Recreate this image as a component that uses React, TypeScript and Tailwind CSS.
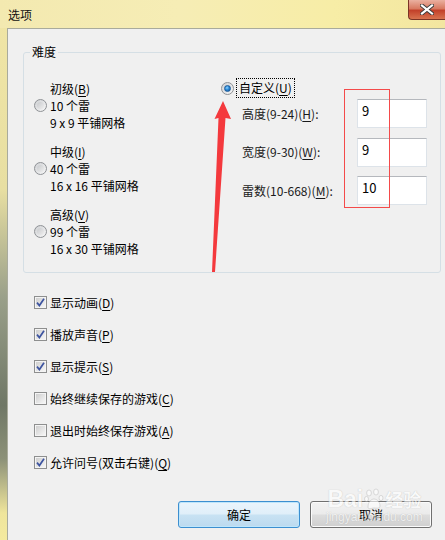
import React from "react";

const font = { fontFamily: '"Noto Sans CJK SC", "Noto Sans", sans-serif' };

const Radio = ({ checked = false }: { checked?: boolean }) => (
  <span className="relative flex size-[13px] shrink-0 items-center justify-center rounded-full border border-[#8f9296] bg-[linear-gradient(135deg,#cfd1d4_0%,#f7f7f7_100%)]">
    {checked ? (
      <span className="size-[7px] rounded-full border border-[#1b5b9b] bg-[radial-gradient(circle_at_40%_35%,#8fd3ff_0%,#2b8ad8_45%,#0f4f93_100%)]" />
    ) : (
      <span className="size-[7px] rounded-full bg-[linear-gradient(135deg,#c8cacd_0%,#eeeeee_100%)]" />
    )}
  </span>
);

const Checkbox = ({ checked = false }: { checked?: boolean }) => (
  <span className="flex size-[13px] shrink-0 items-center justify-center border border-[#8e8f8f] bg-white">
    <span className="flex size-[11px] items-center justify-center border border-[#f4f4f4] bg-[linear-gradient(135deg,#cfcfcf_0%,#f6f6f6_100%)]">
      {checked && (
        <svg width="9" height="9" viewBox="0 0 9 9">
          <path d="M1 4.6 L3.4 7.6 L8 0.8" fill="none" stroke="#3d54a0" strokeWidth="1.7" />
        </svg>
      )}
    </span>
  </span>
);

const Key = ({ k }: { k: string }) => (
  <>
    (<span className="underline underline-offset-[2px]">{k}</span>)
  </>
);

const Level = ({ title, k, mines, grid }: { title: string; k: string; mines: string; grid: string }) => (
  <div className="flex flex-col leading-[17px]">
    <div className="pl-[16px]">
      {title}
      <Key k={k} />
    </div>
    <div className="flex items-center">
      <Radio />
      <span className="pl-[3px]">{mines}</span>
    </div>
    <div className="pl-[16px]">{grid}</div>
  </div>
);

const Field = ({ label, k, value }: { label: string; k: string; value: string }) => (
  <div className="flex items-center">
    <span className="w-[115px] text-[#1a1a1a]">
      {label}
      <Key k={k} />:
    </span>
    <div className="h-[29px] w-[70px] border border-[#dde3e9] border-t-[#b5b8bd] bg-white pl-[4px] pt-[2px] text-[13px] leading-[17px]">
      {value}
    </div>
  </div>
);

const options = [
  { text: "显示动画", k: "D", on: true },
  { text: "播放声音", k: "P", on: true },
  { text: "显示提示", k: "S", on: true },
  { text: "始终继续保存的游戏", k: "C", on: false },
  { text: "退出时始终保存游戏", k: "A", on: false },
  { text: "允许问号(双击右键)", k: "Q", on: true },
];

export default function App() {
  return (
    <div
      style={font}
      className="relative flex h-[540px] w-[445px] flex-col overflow-hidden bg-[linear-gradient(180deg,#f1e6a6_0%,#e8dfa2_35%,#9aa08a_55%,#6f7766_75%,#8c9178_85%,#efe59c_95%,#f4ea9f_100%)] text-[12px] text-black"
    >
      {/* title bar */}
      <div className="flex h-[28px] items-start bg-[linear-gradient(90deg,#f3e9b0_0%,#f6edb5_40%,#f7eda6_75%,#f3e6a0_100%)]">
        <span className="pl-[8px] pt-[6px] leading-[17px] text-[#111]">选项</span>
        <div className="ml-auto flex h-[20px] w-[37px] items-center justify-center rounded-bl-[4px] border border-t-0 border-r-0 border-[#7a3426] bg-[linear-gradient(180deg,#eab0a0_0%,#d87a62_45%,#c2412a_55%,#d8734f_100%)]">
          <svg width="14" height="11" viewBox="0 0 14 11">
            <path d="M2 1.5 L12 9.5 M12 1.5 L2 9.5" stroke="#3a3a3a" strokeWidth="4" strokeLinecap="square" />
            <path d="M2 1.5 L12 9.5 M12 1.5 L2 9.5" stroke="#ffffff" strokeWidth="2.2" strokeLinecap="square" />
          </svg>
        </div>
      </div>

      {/* client area */}
      <div className="ml-[7px] flex flex-1 flex-col border-l border-t border-[#a9ab9c] bg-[#f0f0f0]">
        <fieldset className="ml-[15px] mt-[15px] w-[418px] rounded-[3px] border border-[#d5dfe5] px-0 pb-[15px] pt-[20px]">
          <legend className="ml-[6px] px-[2px] leading-[16px]">难度</legend>
          <div className="flex">
            <div className="flex w-[197px] flex-col gap-[12px] pl-[10px]">
              <Level title="初级" k="B" mines="10 个雷" grid="9 x 9 平铺网格" />
              <Level title="中级" k="I" mines="40 个雷" grid="16 x 16 平铺网格" />
              <Level title="高级" k="V" mines="99 个雷" grid="16 x 30 平铺网格" />
            </div>
            <div className="-mt-[2px] flex flex-col">
              <div className="flex items-center">
                <Radio checked />
                <span className="ml-[2px] border border-dotted border-black px-[2px] leading-[18px]">
                  自定义
                  <Key k="U" />
                </span>
              </div>
              <div className="mt-[1px] flex flex-col gap-[9.5px] pl-[21px]">
                <Field label="高度(9-24)" k="H" value="9" />
                <Field label="宽度(9-30)" k="W" value="9" />
                <Field label="雷数(10-668)" k="M" value="10" />
              </div>
            </div>
          </div>
        </fieldset>

        <div className="mt-[21px] flex flex-col gap-[15px] pl-[26px]">
          {options.map((o) => (
            <div key={o.text} className="flex h-[17px] items-center gap-[3px] leading-[17px]">
              <Checkbox checked={o.on} />
              <span>
                {o.text}
                <Key k={o.k} />
              </span>
            </div>
          ))}
        </div>

        <div className="mt-[30px] flex justify-end gap-[10px] pr-[13px]">
          <button className="h-[27px] w-[122px] rounded-[3px] border border-[#3c8fd0] bg-[linear-gradient(180deg,#eaf5fc_0%,#e0eff9_48%,#c8e2f3_52%,#bcdaef_100%)] shadow-[inset_0_0_0_1px_#bfe6fb]">
            确定
          </button>
          <button className="h-[27px] w-[122px] rounded-[3px] border border-[#707070] bg-[linear-gradient(180deg,#f2f2f2_0%,#ebebeb_48%,#dddddd_52%,#cfcfcf_100%)] shadow-[inset_0_0_0_1px_#fbfbfb]">
            取消
          </button>
        </div>
      </div>

      {/* annotation: red box */}
      <div className="pointer-events-none absolute left-[344px] top-[89px] h-[119px] w-[46px] border-[1.5px] border-[#f44a4a]" />

      {/* annotation: red arrow */}
      <svg className="pointer-events-none absolute left-0 top-0" width="445" height="540" viewBox="0 0 445 540">
        <polygon points="223,101 231,119 225.5,118 215,272 212,272 218.5,118 214.5,119" fill="#f4393d" />
      </svg>

      {/* watermark */}
      <div className="pointer-events-none absolute left-[326px] top-[486px] flex flex-col items-center text-white opacity-60 [text-shadow:0_0_1px_#9a9a9a]">
        <div className="flex items-center leading-[26px]">
          <span className="text-[23px] font-bold" style={{ fontFamily: '"Liberation Sans", sans-serif' }}>
            Bai
          </span>
          <svg width="20" height="22" viewBox="0 0 20 22" className="mx-[1px]">
            <g fill="#ffffff" stroke="#a8a8a8" strokeWidth="0.6">
              <ellipse cx="5" cy="5" rx="2.4" ry="3" />
              <ellipse cx="12" cy="4" rx="2.4" ry="3" />
              <ellipse cx="2.5" cy="11" rx="2" ry="2.6" />
              <ellipse cx="17" cy="10" rx="2" ry="2.6" />
              <path d="M4 19 C4 13 8 11 10 11 C13 11 16 14 16 18 C16 21 12 20 10 20 C8 20 4 22 4 19 Z" />
            </g>
          </svg>
          <span className="text-[18px] font-bold">经验</span>
        </div>
        <span className="-mt-[2px] text-[12px] leading-[14px]" style={{ fontFamily: '"Liberation Sans", sans-serif' }}>
          jingyan.baidu.com
        </span>
      </div>
    </div>
  );
}
